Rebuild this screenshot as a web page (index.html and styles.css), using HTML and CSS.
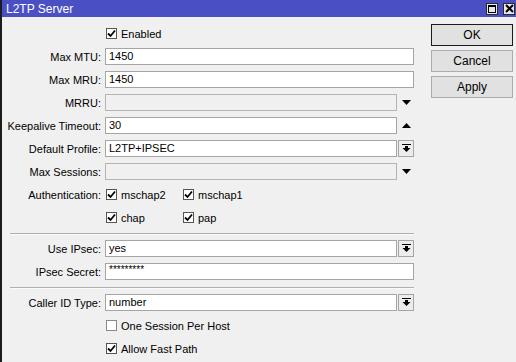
FILE: index.html
```html
<!DOCTYPE html>
<html lang="en">
<head>
  <meta charset="UTF-8" />
  <title>L2TP Server</title>
  <link rel="stylesheet" href="styles.css">
</head>
<body>
  <div class="window">
    <div class="titlebar">
      <span class="title">L2TP Server</span>
      <div class="title-btns">
        <span class="title-btn"><span class="max-icon"></span></span>
        <span class="title-btn">
          <svg width="9" height="9" viewBox="0 0 9 9"><path d="M1 1 L8 8 M8 1 L1 8" stroke="#000" stroke-width="2"/></svg>
        </span>
      </div>
    </div>

    <div class="content">
      <div class="form">
        <div class="row">
          <span class="label"></span>
          <label class="check"><span class="box on"><svg width="9" height="9" viewBox="0 0 9 9"><path d="M1 4.5 L3.5 7 L8 1.5" stroke="#000" stroke-width="1.8" fill="none"/></svg></span>Enabled</label>
        </div>
        <div class="row">
          <span class="label">Max MTU:</span>
          <div class="input">1450</div>
        </div>
        <div class="row">
          <span class="label">Max MRU:</span>
          <div class="input">1450</div>
        </div>
        <div class="row">
          <span class="label">MRRU:</span>
          <div class="input short off"></div>
          <span class="arrow"><svg width="9" height="5" viewBox="0 0 9 5"><polygon points="0,0 9,0 4.5,5" fill="#000"/></svg></span>
        </div>
        <div class="row">
          <span class="label">Keepalive Timeout:</span>
          <div class="input short">30</div>
          <span class="arrow"><svg width="9" height="5" viewBox="0 0 9 5"><polygon points="0,5 9,5 4.5,0" fill="#000"/></svg></span>
        </div>
        <div class="row">
          <span class="label">Default Profile:</span>
          <div class="input short">L2TP+IPSEC</div>
          <span class="drop"><svg width="9" height="9" viewBox="0 0 9 9"><rect x="0" y="0" width="9" height="1" fill="#000"/><rect x="3" y="2" width="3" height="3" fill="#000"/><polygon points="0.5,4 8.5,4 4.5,8" fill="#000"/></svg></span>
        </div>
        <div class="row">
          <span class="label">Max Sessions:</span>
          <div class="input short off"></div>
          <span class="arrow"><svg width="9" height="5" viewBox="0 0 9 5"><polygon points="0,0 9,0 4.5,5" fill="#000"/></svg></span>
        </div>
        <div class="row">
          <span class="label">Authentication:</span>
          <div class="checks">
            <label class="check"><span class="box on"><svg width="9" height="9" viewBox="0 0 9 9"><path d="M1 4.5 L3.5 7 L8 1.5" stroke="#000" stroke-width="1.8" fill="none"/></svg></span>mschap2</label>
            <label class="check"><span class="box on"><svg width="9" height="9" viewBox="0 0 9 9"><path d="M1 4.5 L3.5 7 L8 1.5" stroke="#000" stroke-width="1.8" fill="none"/></svg></span>mschap1</label>
          </div>
        </div>
        <div class="row">
          <span class="label"></span>
          <div class="checks">
            <label class="check"><span class="box on"><svg width="9" height="9" viewBox="0 0 9 9"><path d="M1 4.5 L3.5 7 L8 1.5" stroke="#000" stroke-width="1.8" fill="none"/></svg></span>chap</label>
            <label class="check"><span class="box on"><svg width="9" height="9" viewBox="0 0 9 9"><path d="M1 4.5 L3.5 7 L8 1.5" stroke="#000" stroke-width="1.8" fill="none"/></svg></span>pap</label>
          </div>
        </div>

        <div class="sep"></div>

        <div class="row">
          <span class="label">Use IPsec:</span>
          <div class="input short">yes</div>
          <span class="drop"><svg width="9" height="9" viewBox="0 0 9 9"><rect x="0" y="0" width="9" height="1" fill="#000"/><rect x="3" y="2" width="3" height="3" fill="#000"/><polygon points="0.5,4 8.5,4 4.5,8" fill="#000"/></svg></span>
        </div>
        <div class="row">
          <span class="label">IPsec Secret:</span>
          <div class="input secret">*********</div>
        </div>

        <div class="sep"></div>

        <div class="row">
          <span class="label">Caller ID Type:</span>
          <div class="input short">number</div>
          <span class="drop"><svg width="9" height="9" viewBox="0 0 9 9"><rect x="0" y="0" width="9" height="1" fill="#000"/><rect x="3" y="2" width="3" height="3" fill="#000"/><polygon points="0.5,4 8.5,4 4.5,8" fill="#000"/></svg></span>
        </div>
        <div class="row">
          <span class="label"></span>
          <label class="check"><span class="box"></span>One Session Per Host</label>
        </div>
        <div class="row">
          <span class="label"></span>
          <label class="check"><span class="box on"><svg width="9" height="9" viewBox="0 0 9 9"><path d="M1 4.5 L3.5 7 L8 1.5" stroke="#000" stroke-width="1.8" fill="none"/></svg></span>Allow Fast Path</label>
        </div>
      </div>

      <div class="actions">
        <button class="btn default">OK</button>
        <button class="btn">Cancel</button>
        <button class="btn">Apply</button>
      </div>
    </div>
  </div>
</body>
</html>
```

FILE: styles.css
```css
* {
  margin: 0;
  padding: 0;
  box-sizing: border-box;
}

body {
  background-color: #f0f0f0;
  font-family: "Liberation Sans", Arial, sans-serif;
  font-size: 11px;
  color: #000;
  overflow: hidden;
}

.window {
  width: 516px;
  height: 362px;
  border-left: 2px solid #1c1c1c;
  background-color: #f0f0f0;
}

/* title bar */
.titlebar {
  height: 17px;
  background-color: #4a50c4;
  display: flex;
  align-items: center;
  padding-left: 4px;
}

.title {
  color: #fff;
  font-size: 12px;
}

.title-btns {
  margin-left: auto;
  display: flex;
  gap: 5px;
  padding-right: 1px;
}

.title-btn {
  width: 12px;
  height: 12px;
  background-color: #e8e8e8;
  border: 1px solid #2a2a2a;
  display: flex;
  align-items: center;
  justify-content: center;
}

.max-icon {
  width: 8px;
  height: 8px;
  border: 1px solid #000;
  border-top-width: 2px;
}

/* layout */
.content {
  display: flex;
}

.form {
  width: 412px;
  padding-top: 5px;
}

.row {
  height: 23px;
  display: flex;
  align-items: center;
}

.label {
  width: 99px;
  margin-right: 4px;
  text-align: right;
  white-space: nowrap;
}

.input {
  width: 309px;
  height: 17px;
  line-height: 15px;
  padding-left: 3px;
  background-color: #fff;
  border: 1px solid #a5a5a5;
  white-space: nowrap;
}

.input.short {
  width: 292px;
}

.input.off {
  background-color: #f0f0f0;
  border-color: #b4b4b4;
}

.input.secret {
  font-size: 10px;
  line-height: 12px;
}

.arrow {
  width: 17px;
  height: 17px;
  display: flex;
  align-items: center;
  justify-content: center;
  padding-left: 1px;
}

.drop {
  width: 16px;
  height: 17px;
  margin-left: 1px;
  border: 1px solid #a5a5a5;
  background-color: #ececec;
  display: flex;
  align-items: center;
  justify-content: center;
}

.checks {
  display: flex;
}

.checks .check {
  width: 77px;
}

.check {
  display: flex;
  align-items: center;
  gap: 4px;
  padding-left: 1px;
}

.box {
  width: 11px;
  height: 11px;
  border: 1px solid #8a8a8a;
  background-color: #fff;
  display: flex;
  align-items: center;
  justify-content: center;
}

.box.on {
  border-color: #555;
}

.sep {
  height: 1px;
  margin: 4px 0 3px 8px;
  background-color: #b0b0b0;
  box-shadow: 0 1px 0 #fafafa;
}

/* buttons */
.actions {
  margin-left: 17px;
  padding-top: 7px;
  display: flex;
  flex-direction: column;
  gap: 4px;
}

.btn {
  width: 82px;
  height: 22px;
  font-family: "Liberation Sans", Arial, sans-serif;
  font-size: 12px;
  color: #000;
  background-color: #e1e1e1;
  border: 1px solid #adadad;
}

.btn.default {
  border: 1px solid #1a1a1a;
}
```
